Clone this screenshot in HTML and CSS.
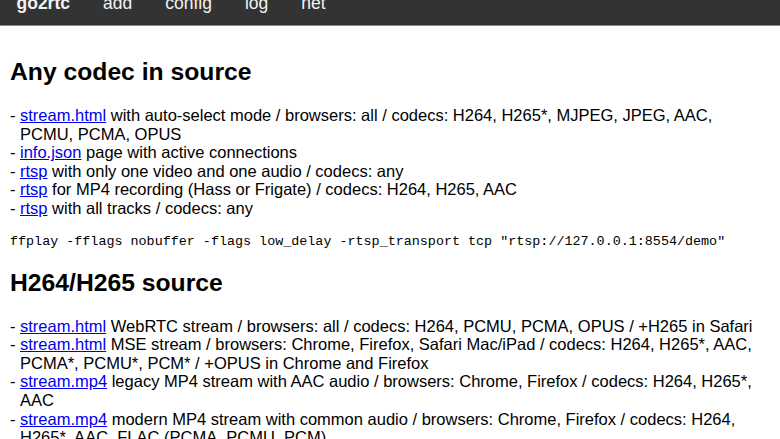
FILE: index.html
```html
<!DOCTYPE html>
<html lang="en">
<head>
    <meta charset="UTF-8">
    <meta name="viewport" content="width=device-width, initial-scale=1.0">
    <title>go2rtc - links</title>
    <link rel="stylesheet" href="styles.css">
</head>
<body>
    <nav class="topnav">
        <ul>
            <li><a class="brand" href="index.html">go2rtc</a></li>
            <li><a href="add.html">add</a></li>
            <li><a href="editor.html">config</a></li>
            <li><a href="log.html">log</a></li>
            <li><a href="net.html">net</a></li>
        </ul>
    </nav>
    <main class="links">
        <h2>Any codec in source</h2>
        <ul class="dash-list">
            <li><a href="stream.html?src=demo">stream.html</a> with auto-select mode / browsers: all / codecs: H264, H265*, MJPEG, JPEG, AAC, PCMU, PCMA, OPUS</li>
            <li><a href="api/streams?src=demo">info.json</a> page with active connections</li>
            <li><a href="rtsp://127.0.0.1:8554/demo">rtsp</a> with only one video and one audio / codecs: any</li>
            <li><a href="rtsp://127.0.0.1:8554/demo?mp4">rtsp</a> for MP4 recording (Hass or Frigate) / codecs: H264, H265, AAC</li>
            <li><a href="rtsp://127.0.0.1:8554/demo?video=all&amp;audio=all">rtsp</a> with all tracks / codecs: any</li>
        </ul>
        <pre>ffplay -fflags nobuffer -flags low_delay -rtsp_transport tcp "rtsp://127.0.0.1:8554/demo"</pre>

        <h2>H264/H265 source</h2>
        <ul class="dash-list">
            <li><a href="stream.html?src=demo&amp;mode=webrtc">stream.html</a> WebRTC stream / browsers: all / codecs: H264, PCMU, PCMA, OPUS / +H265 in Safari</li>
            <li><a href="stream.html?src=demo&amp;mode=mse">stream.html</a> MSE stream / browsers: Chrome, Firefox, Safari Mac/iPad / codecs: H264, H265*, AAC, PCMA*, PCMU*, PCM* / +OPUS in Chrome and Firefox</li>
            <li><a href="api/stream.mp4?src=demo">stream.mp4</a> legacy MP4 stream with AAC audio / browsers: Chrome, Firefox / codecs: H264, H265*, AAC</li>
            <li><a href="api/stream.mp4?src=demo&amp;mp4=flac">stream.mp4</a> modern MP4 stream with common audio / browsers: Chrome, Firefox / codecs: H264, H265*, AAC, FLAC (PCMA, PCMU, PCM)</li>
            <li><a href="api/stream.mp4?src=demo&amp;mp4=all">stream.mp4</a> MP4 stream with any audio / browsers: Chrome / codecs: H264, H265*, AAC, OPUS, MP3, FLAC (PCMA, PCMU, PCM)</li>
            <li><a href="api/frame.mp4?src=demo">frame.mp4</a> snapshot in MP4-format / browsers: all / codecs: H264, H265*</li>
            <li><a href="api/stream.m3u8?src=demo">stream.m3u8</a> legacy HLS/TS / browsers: Safari all, Chrome Android / codecs: H264</li>
        </ul>
    </main>
</body>
</html>
```

FILE: styles.css
```css
body {
    margin: 0;
    padding: 0;
    font-family: 'Liberation Sans', Arial, Helvetica, sans-serif;
    color: #000;
    background-color: #fff;
}
.topnav {
    background-color: #333;
    border-bottom: 1px solid #8a8a8a;
    margin-top: -20px;
}
.topnav ul {
    display: flex;
    margin: 0;
    padding: 0;
    list-style: none;
}
.topnav a {
    display: block;
    padding: 14px 16.5px 12px;
    color: #f2f2f2;
    font-size: 17.5px;
    line-height: 19px;
    text-decoration: none;
}
.topnav a.brand {
    font-weight: 700;
}
.links {
    padding: 12px 20px 10px 10px;
}
.links h2 {
    font-size: 24.7px;
    margin: 20px 0;
}
.dash-list {
    margin: 16px 0;
    padding-left: 10px;
    list-style-type: "- ";
    font-size: 16.5px;
    line-height: 18.6px;
}
.dash-list a {
    color: #0000ee;
}
.links pre {
    font-family: 'Liberation Mono', 'Courier New', monospace;
    font-size: 13.4px;
    margin: 16px 0;
}
```
